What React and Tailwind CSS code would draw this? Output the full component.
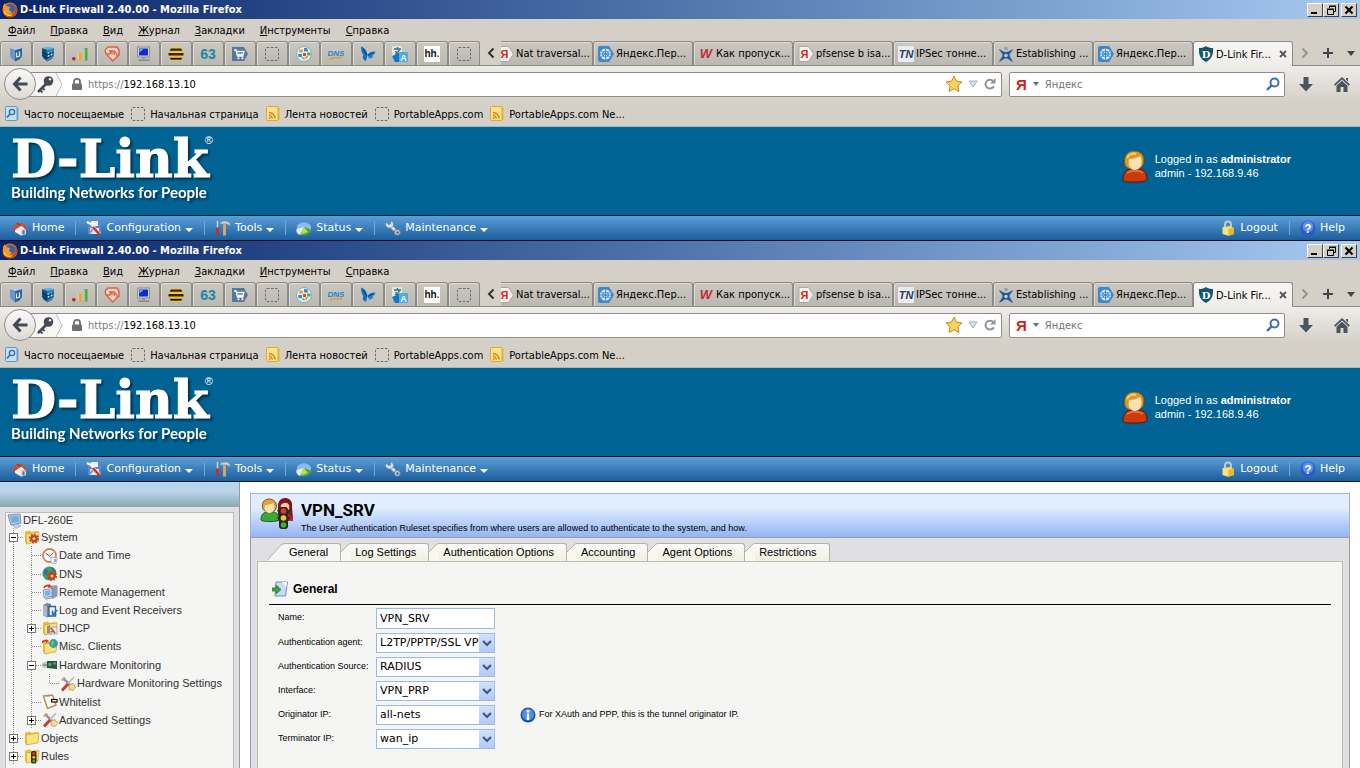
import { useState } from 'react';

const uiFont = "font-['DejaVu_Sans_Condensed','DejaVu_Sans',sans-serif]";
const navFont = "font-['DejaVu_Sans',sans-serif]";
const pageFont = "font-['Liberation_Sans',Arial,sans-serif]";

/* ---------- small 16x16 drawings ---------- */

const Svg = ({ children, className = 'w-4 h-4' }) => (
  <svg viewBox="0 0 16 16" className={`${className} shrink-0`} fill="none" aria-hidden="true">
    {children}
  </svg>
);

const FirefoxIcon = () => (
  <Svg>
    <circle cx="8" cy="8" r="7.5" fill="#e8761a" />
    <circle cx="8.5" cy="6.5" r="4.8" fill="#3a62a8" />
    <path d="M1 4l2-3 1 3 4 1-1 3 3 2-3 2-4-1-2-4z" fill="#f49a2a" />
    <path d="M13 2c3 3 3 8 0 11s-8 3-10 0c4 2 9 0 10-4 .6-2 .5-5 0-7z" fill="#c9470d" />
    <path d="M2 9c1 4 5 5 8 4" stroke="#fbc944" strokeWidth="1.2" />
  </Svg>
);

const CubeIcon = ({ dark }) => (
  <Svg>
    <path d="M2 2l6 1.500v12L4 13 2 10z" fill={dark ? '#15507f' : '#6d95c6'} />
    <path d="M7 3.500l7-1.500v8l-2.500 3.500-4.500 2z" fill={dark ? '#2b82b8' : '#2f62a3'} />
    <path d="M2 2L8 .5 14 2 7.500 4z" fill={dark ? '#5fb6dd' : '#b5cce6'} />
    <path d="M8.500 6.500v4.500l3-1V5.500" stroke="#dcebf8" strokeWidth="1.200" />
    {dark && <path d="M2.500 6l4.500 3 6.500-3M3 9.500l4 2.500 5.500-2.500" stroke="#0b2f52" strokeWidth="1.200" />}
  </Svg>
);

const BarsIcon = () => (
  <Svg>
    <circle cx="1.800" cy="12.800" r="1.800" fill="#c3202c" />
    <rect x="6" y="7" width="3.500" height="7.500" fill="#e5a92b" />
    <rect x="12" y="2" width="3.500" height="12.500" fill="#57a640" />
    <path d="M6.500 7.500v6.500M12.600 2.500v11.500" stroke="#fff" strokeOpacity=".5" />
  </Svg>
);

const HandIcon = () => (
  <Svg>
    <path d="M1 4l3-3h9l2 3v5L8.500 15 6 12" stroke="#dd6244" strokeWidth="1.500" fill="#ecd3ca" />
    <path d="M1 4l1 4 4 0M5 5h5l3 3v3M6 8l1-3M8 8.500V5.500M10.500 9l-.5-3M6 12l-3-3" stroke="#dd6244" strokeWidth="1.300" />
  </Svg>
);

const MonitorIcon = () => (
  <Svg>
    <rect x="1.500" y="1" width="12" height="10" fill="#d7d5cf" stroke="#8b8b95" />
    <rect x="3" y="2.500" width="9" height="7" fill="#0a2fd0" />
    <path d="M3.500 3h4l-4 3.500z" fill="#7ea6ff" />
    <path d="M6 11h3v2H6z" fill="#9a9aa2" />
    <path d="M2.500 14.200h11" stroke="#8a8890" strokeWidth="1.500" />
  </Svg>
);

const BeeIcon = () => (
  <Svg>
    <circle cx="8" cy="8" r="7.500" fill="#f6c62e" />
    <path d="M3 2.500h10l1.500 2.300h-13zM.5 7h15v2.500H.5zM1.500 11.700h13L13 13.700H3z" fill="#2b261f" />
  </Svg>
);

const LetterIcon = ({ text, fill, bg, size = 12, x = 8, y = 12, italic }) => (
  <Svg>
    {bg && <rect width="16" height="16" rx="1" fill={bg} />}
    <text x={x} y={y} textAnchor="middle" fontSize={size} fontWeight="bold" fill={fill}
      fontStyle={italic ? 'italic' : 'normal'} fontFamily="Liberation Sans, sans-serif">{text}</text>
  </Svg>
);

const CartIcon = () => (
  <Svg>
    <path d="M0 1h12l4 7-4 7H0z" fill="#54799f" />
    <path d="M2 4h2l1.500 6h6M5 5.500h7l-1 3H6" stroke="#fff" strokeWidth="1.300" />
    <circle cx="6.500" cy="12.300" r="1" fill="#fff" /><circle cx="10.500" cy="12.300" r="1" fill="#fff" />
  </Svg>
);

const BlankIcon = () => (
  <Svg>
    <rect x="1.500" y="1.500" width="13" height="13" rx="1.500" stroke="#6f6d69" strokeDasharray="2.500 1.500" />
  </Svg>
);

const BallIcon = () => (
  <Svg>
    <circle cx="8" cy="8" r="7.500" fill="#e6f1f5" stroke="#7fb0c8" />
    <path d="M3.500 3.500h3.200v3H3zM9.500 10h3l-2 3h-1z" fill="#f0952a" />
    <path d="M8 2h3l1.500 3.500H8zM2 8h4v3H2.500z" fill="#3690c8" />
    <path d="M11 6.500h3.500v3H11zM5 11.500h3.500V14z" fill="#5cab45" />
    <path d="M7 7h3v3H7z" fill="#d24a3a" />
  </Svg>
);

const DnsTextIcon = () => (
  <Svg>
    <text x="8" y="10" textAnchor="middle" fontSize="8" fontWeight="bold" fontStyle="italic" fill="#1787cc" fontFamily="Liberation Sans, sans-serif">DNS</text>
    <path d="M2 13c4-1.500 8-1.500 12-1.500" stroke="#e8932a" strokeWidth="1.400" />
  </Svg>
);

const ButterflyIcon = () => (
  <Svg>
    <path d="M1 .5c4 1 6 5 6.500 8.500L6 15C3 14 2 11 3.500 9 1.500 7 1 4 1 .5z" fill="#1470c5" />
    <path d="M7.500 9C9 6 12 5 15.500 5.500c0 2-1 3-2.500 3.500.5 2-1.500 4-4 3.500z" fill="#2583d6" />
    <path d="M3 3l4 6M13.500 6.500L8 9.500" stroke="#0b3f86" strokeWidth="1.100" />
  </Svg>
);

const TranslateIcon = () => (
  <Svg>
    <rect width="10" height="11" rx="1" fill="#dfe8da" />
    <path d="M2 3h7M5.500 1v2M3 8c3-1 4-3 4.500-5M3.500 5c1 2 2 3 4 3.500" stroke="#39708c" strokeWidth="1.300" />
    <path d="M0 10l7-3v9H3z" fill="#1574c6" />
    <rect x="7" y="6" width="9" height="10" rx="1" fill="#4fa9e4" />
    <text x="11.500" y="14.500" textAnchor="middle" fontSize="9" fontWeight="bold" fill="#fff" fontFamily="Liberation Sans, sans-serif">A</text>
  </Svg>
);

const YandexIcon = () => (
  <Svg>
    <path d="M1 .5h9.500l5 7.500-5 7.500H1z" fill="#f5f3f0" stroke="#a9a6a2" />
    <text x="6.500" y="12" textAnchor="middle" fontSize="11" fontWeight="bold" fill="#d8251c" fontFamily="Liberation Sans, sans-serif">Я</text>
  </Svg>
);

const GlobeTagIcon = () => (
  <Svg>
    <path d="M0 2q0-2 2-2h9l5 8-5 8H2q-2 0-2-2z" fill="#3f86cb" />
    <circle cx="7.500" cy="8" r="5.500" fill="#d5e9f8" />
    <path d="M3 5l9 6M3 11l9-6M7.500 2.500v11M2 8h11" stroke="#3f86cb" strokeWidth=".9" />
    <circle cx="7.500" cy="8" r="3" stroke="#3f86cb" strokeWidth=".9" />
  </Svg>
);

const SplashIcon = () => (
  <Svg>
    <path d="M1 3c3 1 4 3 7 3s4-2 7-3c-1 3-3.500 4-3.500 6s2.500 4 3.500 7c-3-1-4-3.500-7-3.500S4 15 1 16c1-3 3.500-5 3.500-7S2 6 1 3z" fill="#1d5c9e" />
    <circle cx="8" cy="2.500" r="1.800" fill="#8c9eb0" />
    <circle cx="8" cy="9.500" r="1.800" fill="#c8c5be" />
  </Svg>
);

const ShieldIcon = () => (
  <Svg>
    <path d="M8 0c2 1.500 4 2 7 2 .5 6-1 11-7 14C2 13 .5 8 1 2c3 0 5-.5 7-2z" fill="#14566f" />
    <text x="8" y="11.500" textAnchor="middle" fontSize="10" fontWeight="bold" fill="#fff" fontFamily="DejaVu Serif, serif">D</text>
  </Svg>
);

const FeedIcon = () => (
  <Svg>
    <path d="M3 1.500h11.500V14H3z" fill="#e0b744" />
    <rect x="1.500" y=".5" width="11.500" height="14" rx="1" fill="#f7e28a" stroke="#d3ac3a" />
    <path d="M4 6.500a6 6 0 016 6M4 9.300a3.200 3.200 0 013.200 3.200" stroke="#d8861c" strokeWidth="1.500" />
    <circle cx="4.700" cy="12" r="1" fill="#d8861c" />
  </Svg>
);

const FrequentIcon = () => (
  <Svg>
    <path d="M3 2h11.500v12H3z" fill="#7dabd0" />
    <rect x="1.500" y=".5" width="11.500" height="14" rx="1" fill="#c4e0f4" stroke="#5f97c4" />
    <circle cx="8" cy="6" r="2.600" stroke="#3b6f9f" strokeWidth="1.400" />
    <path d="M6 8l-3 3.500" stroke="#3b6f9f" strokeWidth="1.800" />
  </Svg>
);

const HouseIcon = () => (
  <Svg>
    <path d="M3 8l6-4 5 5v5l-5 1.500L3 12z" fill="#f3efe8" />
    <path d="M9 9l5-1v6l-5 1.500z" fill="#cfd5e0" />
    <path d="M0 8l5-5 5 0 6 6-2 1-4.500-4.500L3 10z" fill="#c8512b" />
    <path d="M5 3l4.500 3" stroke="#8d3012" />
    <path d="M10.500 10.500l2-.4v4l-2 .5z" fill="#56719c" />
  </Svg>
);

const ConfigIcon = () => (
  <Svg>
    <rect x="2" y="1" width="13" height="12" fill="#5d86cf" />
    <rect x="5" y="1" width="7" height="5" fill="#f0f2f8" />
    <rect x="4" y="8" width="9" height="6" fill="#dfe5f3" />
    <path d="M1 2l4 2 9 10" stroke="#fff" strokeWidth="2.400" />
    <path d="M7 7l7 8" stroke="#c8352c" strokeWidth="2.600" />
    <path d="M3 14l4-5" stroke="#8d96aa" strokeWidth="2" />
  </Svg>
);

const ToolsIcon = () => (
  <Svg>
    <path d="M2.500 1v7" stroke="#cfd4da" strokeWidth="1.500" />
    <path d="M2.500 7.500V15" stroke="#c32f22" strokeWidth="2.800" />
    <path d="M9.500 4v11.500" stroke="#d9ac68" strokeWidth="2.800" />
    <path d="M5 4c0-2 2-3 4-3h3l3 2v3l-3-2H5z" fill="#cdd1d6" stroke="#7c828a" strokeWidth=".6" />
  </Svg>
);

const StatusIcon = () => (
  <Svg>
    <ellipse cx="8" cy="9" rx="7.700" ry="6.300" fill="#3c74c4" />
    <ellipse cx="8" cy="7.500" rx="7.200" ry="5.300" fill="#8dbbe9" />
    <path d="M8 7l7.500 3c-1 4-6 6-11 5z" fill="#4fa638" />
    <path d="M8 7l-4 8C.5 13.500 0 11 .5 9z" fill="#ddeed6" />
    <path d="M8 7l4 5-7 2.500z" fill="#bade58" />
  </Svg>
);

const WrenchIcon = () => (
  <Svg>
    <path d="M4.500 5l7.500 7" stroke="#66788e" strokeWidth="4.400" />
    <path d="M4.500 5l7.500 7" stroke="#d8dfe8" strokeWidth="3" />
    <path d="M1 2l2.500 2.500L5.500 4 5.500 1c3 .5 4 4 2 6S1 8 .5 5z" fill="#d8dfe8" stroke="#66788e" strokeWidth=".6" />
    <circle cx="12.300" cy="12.300" r="3" fill="#c1cbd8" stroke="#6c7d92" />
    <circle cx="12.500" cy="12.500" r="1.200" fill="#41719f" />
  </Svg>
);

const PadlockIcon = () => (
  <Svg>
    <path d="M5 7V4.500c0-4 6-4 6 0V8" stroke="#c4c8d0" strokeWidth="2" />
    <path d="M2.500 7l7-1 4.500 2v6l-6 1.700L2.500 14z" fill="#f4da66" />
    <path d="M8.500 9L14 7.500V14l-5.500 1.700z" fill="#e3b93c" />
    <path d="M3 9h5M3 11h5M3 13h5" stroke="#fff3b8" strokeWidth=".8" />
  </Svg>
);

const HelpIcon = () => (
  <Svg>
    <circle cx="8" cy="8" r="7.500" fill="#2b58d0" />
    <circle cx="8" cy="6.500" r="5.500" fill="#5b8bec" />
    <text x="8" y="12.500" textAnchor="middle" fontSize="12" fontWeight="bold" fill="#fff" fontFamily="Liberation Sans, sans-serif">?</text>
  </Svg>
);

const InfoIcon = () => (
  <Svg>
    <circle cx="8" cy="8" r="7.500" fill="#1c4fa8" />
    <circle cx="8" cy="7.500" r="6" fill="#4d8fdd" />
    <rect x="6.800" y="6.500" width="2.400" height="6.500" fill="#fff" />
    <circle cx="8" cy="4.200" r="1.500" fill="#fff" />
  </Svg>
);

const PersonIcon = ({ className = 'w-[26px] h-8' }) => (
  <svg viewBox="0 0 26 32" className={className} aria-hidden="true">
    <path d="M1 28c0-6 4-10 9-10h6c5 0 9 3 9 9 0 3-2 4-12 4S1 31 1 28z" fill="#c93a0c" stroke="#5e1503" />
    <path d="M5 22c4-3 12-3 16 0" stroke="#ee6b34" strokeWidth="2" fill="none" />
    <path d="M3 14C1 6 5 0 12 0s12 5 9 14c-2 5-16 6-18 0z" fill="#d99a27" stroke="#8a5a10" />
    <path d="M5 7c2-4 6-5 9-4" stroke="#f5d27a" strokeWidth="2" fill="none" />
    <path d="M7 8c4 0 8-1 11-3 3 4 2 14-5 14-6 0-7-6-6-11z" fill="#fbe0b4" />
  </svg>
);

/* ---------- browser window ---------- */

const menus = ['Файл', 'Правка', 'Вид', 'Журнал', 'Закладки', 'Инструменты', 'Справка'];

const pinned = [
  ['Server', <CubeIcon />],
  ['Server 2', <CubeIcon dark />],
  ['Stats', <BarsIcon />],
  ['Hand', <HandIcon />],
  ['Desktop', <MonitorIcon />],
  ['Beeline', <BeeIcon />],
  ['63', <LetterIcon text="63" fill="#1b87a6" size={14} y={13} />],
  ['Shop', <CartIcon />],
  ['Blank', <BlankIcon />],
  ['Globe', <BallIcon />],
  ['DNS', <DnsTextIcon />],
  ['Butterfly', <ButterflyIcon />],
  ['Translate', <TranslateIcon />],
  ['hh', <LetterIcon text={<>hh<tspan fill="#e2231a">.</tspan></>} fill="#111" bg="#fff" size={10} y={11} />],
  ['Blank 2', <BlankIcon />],
];

const tabs = [
  ['Nat traversal...', <YandexIcon />],
  ['Яндекс.Пер...', <GlobeTagIcon />],
  ['Как пропуск...', <LetterIcon text="W" fill="#bf2f36" size={13} italic />],
  ['pfsense b isa...', <YandexIcon />],
  ['IPSec тонне...', <LetterIcon text="TN" fill="#2b4164" bg="#e9ecf0" size={11} italic />],
  ['Establishing ...', <SplashIcon />],
  ['Яндекс.Пер...', <GlobeTagIcon />],
];

const bookmarks = [
  ['Часто посещаемые', <FrequentIcon />],
  ['Начальная страница', <BlankIcon />],
  ['Лента новостей', <FeedIcon />],
  ['PortableApps.com', <BlankIcon />],
  ['PortableApps.com Ne...', <FeedIcon />],
];

const navLinks = [
  ['Home', <HouseIcon />, false],
  ['Configuration', <ConfigIcon />, true],
  ['Tools', <ToolsIcon />, true],
  ['Status', <StatusIcon />, true],
  ['Maintenance', <WrenchIcon />, true],
];

const WindowButton = ({ label, children }) => (
  <button type="button" aria-label={label} className="h-[14px] w-4 bg-[#d4d0c8] border border-t-white border-l-white border-r-[#404040] border-b-[#404040] flex items-center justify-center">
    <svg viewBox="0 0 10 10" className="w-[10px] h-[10px]" fill="none" stroke="#000">{children}</svg>
  </button>
);

const TitleBar = () => (
  <div className="h-[19px] pl-[2px] pr-[3px] flex items-center bg-linear-to-r from-[#0a246a] to-[#a6caf0]">
    <FirefoxIcon />
    <span className="ml-[2px] pt-[2px] flex-1 text-[11px] font-bold text-white whitespace-nowrap">D-Link Firewall 2.40.00 - Mozilla Firefox</span>
    <WindowButton label="Minimize"><path d="M1 8h6" strokeWidth="2" /></WindowButton>
    <WindowButton label="Restore">
      <path d="M3.500 3V1.500h6v5H8M3 1h7" /><path d="M1.500 4.500h6v5h-6zM1 4h7" />
    </WindowButton>
    <span className="w-[2px]" />
    <WindowButton label="Close"><path d="M1.500 1.500l7 7M8.500 1.500l-7 7" strokeWidth="2" /></WindowButton>
  </div>
);

const tabShape = 'rounded-t-[3px] border border-[#8d8b87] shadow-[inset_1px_1px_0_#dedbd5]';

const TabStrip = () => (
  <div className="h-[25px] flex items-stretch border-b border-[#8d8b87]">
    {pinned.map(([name, icon]) => (
      <button key={name} type="button" aria-label={name} className={`w-8 shrink-0 border-b-0 flex items-center justify-center bg-linear-to-b from-[#cbc8c1] to-[#bbb8b1] ${tabShape}`}>
        {icon}
      </button>
    ))}
    <button type="button" aria-label="Scroll left" className="w-[21px] shrink-0 flex items-center justify-center">
      <svg viewBox="0 0 8 12" className="w-2 h-3" fill="none" stroke="#333" strokeWidth="2"><path d="M6.500 1.500L2 6l4.500 4.500" /></svg>
    </button>
    <div className="flex-1 min-w-0 flex justify-end overflow-hidden -mb-px">
      {tabs.map(([title, icon], i) => (
        <button key={i} type="button" className={`w-[100px] mb-px shrink-0 pl-1 gap-[2px] border-b-0 flex items-center overflow-hidden bg-linear-to-b from-[#cbc8c1] to-[#bbb8b1] whitespace-nowrap ${tabShape}`}>
          {icon}
          <span className="pt-[2px]">{title}</span>
        </button>
      ))}
      <div className="w-[100px] shrink-0 pl-1 pr-[5px] gap-[2px] border-b-0 rounded-t-[3px] border border-[#8d8b87] bg-linear-to-b from-[#f8f7f5] to-[#efedea] flex items-center whitespace-nowrap">
        <ShieldIcon />
        <span className="flex-1 pt-[2px]">D-Link Fir...</span>
        <button type="button" aria-label="Close tab">
          <svg viewBox="0 0 8 8" className="w-2 h-2" stroke="#555" strokeWidth="1.800"><path d="M1 1l6 6M7 1L1 7" /></svg>
        </button>
      </div>
    </div>
    <div className="w-[67px] shrink-0 pl-2 pr-[5px] flex items-center justify-between">
      <button type="button" aria-label="Scroll right">
        <svg viewBox="0 0 8 12" className="w-2 h-3" fill="none" stroke="#94918c" strokeWidth="1.800"><path d="M1.500 1.500L6 6l-4.500 4.500" /></svg>
      </button>
      <button type="button" aria-label="New tab">
        <svg viewBox="0 0 12 12" className="w-3 h-3" stroke="#3f454c" strokeWidth="2"><path d="M6 1v10M1 6h10" /></svg>
      </button>
      <button type="button" aria-label="All tabs">
        <svg viewBox="0 0 8 5" className="w-2 h-[5px]" fill="#3f454c"><path d="M0 0h8L4 5z" /></svg>
      </button>
    </div>
  </div>
);

const AddressBar = () => (
  <div className="h-9 pl-1 pr-[10px] flex items-center bg-linear-to-b from-[#efedea] to-[#d4d0c8]">
    <button type="button" aria-label="Back" className="relative z-10 w-8 h-8 shrink-0 rounded-full border border-[#8f8d89] bg-linear-to-b from-[#fbfaf9] to-[#dddad4] flex items-center justify-center">
      <svg viewBox="0 0 16 16" className="w-4 h-4" fill="none" stroke="#424c57" strokeWidth="3"><path d="M8.500 1.500L2.500 8l6 6.500M3 8h12.500" /></svg>
    </button>
    <div className="-ml-2 h-[25px] flex-1 min-w-0 flex items-center border border-[#8f8d89] rounded-r-[2px] bg-white">
      <svg viewBox="0 0 34 23" className="w-[34px] h-[23px] shrink-0" fill="none">
        <path d="M0 0h27l6 11.500-6 11.500H0z" fill="#f7f6f4" />
        <path d="M27 0l6 11.500-6 11.500" stroke="#bdbbb7" />
        <path d="M9 19l9-9" stroke="#424c57" strokeWidth="2.600" />
        <path d="M11 17l2.500 2.500M13 14.500l2.500 2.500" stroke="#424c57" strokeWidth="1.800" />
        <circle cx="19.500" cy="8" r="4.800" fill="#424c57" />
        <circle cx="21" cy="6.300" r="1.200" fill="#f7f6f4" />
      </svg>
      <svg viewBox="0 0 10 12" className="ml-[9px] w-[10px] h-3 shrink-0" fill="none">
        <path d="M2 6V3.500c0-3.500 6-3.500 6 0V6" stroke="#6f6f6f" strokeWidth="1.800" />
        <rect y="5.500" width="10" height="6.500" rx="1" fill="#6f6f6f" />
      </svg>
      <div className="ml-[6px] pt-[2px] flex-1 text-[#7c7c7c]">https://<span className="text-black">192.168.13.10</span></div>
      <button type="button" aria-label="Bookmark this page">
        <svg viewBox="0 0 18 18" className="w-[18px] h-[18px]"><path d="M9 1l2.400 5.200 5.600.7-4.100 3.900 1.100 5.700L9 13.700l-5 2.800 1.100-5.700L1 6.900l5.600-.7z" fill="#fbd35c" stroke="#c08a2e" /></svg>
      </button>
      <svg viewBox="0 0 10 8" className="ml-[5px] w-[10px] h-2" fill="#dfe2e6" stroke="#a5aab2"><path d="M1 1h8L5 7z" /></svg>
      <button type="button" aria-label="Reload" className="ml-[6px] mr-[5px]">
        <svg viewBox="0 0 12 12" className="w-3 h-3" fill="none"><path d="M9.500 3.500A4.400 4.400 0 106 10.500c1.500 0 3-.8 4-2" stroke="#8e959d" strokeWidth="2" /><path d="M11.500 0v5.500H6z" fill="#8e959d" /></svg>
      </button>
    </div>
    <div className="ml-[7px] w-[276px] h-[25px] shrink-0 pl-[6px] pr-1 flex items-center border border-[#8f8d89] rounded-[2px] bg-white">
      <span className="text-[15px] leading-none font-bold text-[#cf1f17] font-['Liberation_Sans',sans-serif]">Я</span>
      <svg viewBox="0 0 6 4" className="ml-[6px] w-[6px] h-1" fill="#6d6d6d"><path d="M0 0h6L3 4z" /></svg>
      <input type="search" aria-label="Яндекс" placeholder="Яндекс" className="ml-[6px] pt-[2px] flex-1 min-w-0 outline-none placeholder:text-[#757575]" />
      <button type="button" aria-label="Search">
        <svg viewBox="0 0 14 14" className="w-[14px] h-[14px]" fill="none" stroke="#3c6fae"><circle cx="8.500" cy="5.500" r="4" strokeWidth="2" /><path d="M5.500 8.500L1 13" strokeWidth="2.400" /></svg>
      </button>
    </div>
    <button type="button" aria-label="Downloads" className="ml-[14px]">
      <svg viewBox="0 0 14 15" className="w-[14px] h-[15px]" fill="#4b5560"><path d="M4.500 0h5v7H14l-7 7.500L0 7h4.500z" /></svg>
    </button>
    <button type="button" aria-label="Home page" className="ml-[21px]">
      <svg viewBox="0 0 16 15" className="w-4 h-[15px]"><path d="M8 0l8 7.500-1.200 1.200L8 2.500 1.200 8.700 0 7.500zM12 1h2v3.500l-2-2z" fill="#4b5560" /><path d="M8 3.800l5.500 5V15H9.500v-5h-3v5h-4V8.800z" fill="#4b5560" /></svg>
    </button>
  </div>
);

const BrandHeader = () => (
  <header className={`h-[89px] border-t border-[#a5b8bf] bg-[#006394] flex items-start justify-between text-white ${pageFont}`}>
    <a href="#home" className="pl-[11px] pt-[7px] block">
      <span className="flex items-start">
        <span className="text-[52px] leading-[50px] font-bold [-webkit-text-stroke:1px_white] [filter:drop-shadow(2px_2px_1px_#00304a)] font-['DejaVu_Serif',serif]">D-Link</span>
        <span className="text-[11px] leading-3 -ml-1">®</span>
      </span>
      <span className="block text-[15px] leading-4 font-bold whitespace-nowrap [filter:drop-shadow(2px_2px_1px_#00304a)] font-['Lato',sans-serif]">Building Networks for People</span>
    </a>
    <div className="pt-6 pr-[69px] flex gap-[7px]">
      <PersonIcon />
      <p className="text-[11px] leading-[14px] pt-px">
        Logged in as <b>administrator</b><br />admin - 192.168.9.46
      </p>
    </div>
  </header>
);

const Separator = () => <span className="w-px h-[14px] bg-[#6fa9d8] ml-[11px] mr-[10px]" />;

const SiteNav = () => (
  <nav className={`h-[26px] pl-3 pr-[15px] flex items-center border-y border-[#06121c] bg-linear-to-b from-[#5b9fd8] to-[#1a5e9c] text-[11px] text-white whitespace-nowrap ${navFont}`}>
    {navLinks.map(([label, icon, more], i) => (
      <div key={label} className="flex items-center">
        {i > 0 && <Separator />}
        <a href={`#${label}`} className="flex items-center gap-1">
          {icon}
          {label}
          {more && <svg viewBox="0 0 8 4" className="w-2 h-1 mt-1" fill="#fff"><path d="M0 0h8L4 4z" /></svg>}
        </a>
      </div>
    ))}
    <span className="flex-1" />
    <a href="#logout" className="flex items-center gap-1"><PadlockIcon />Logout</a>
    <Separator />
    <a href="#help" className="flex items-center gap-1"><HelpIcon />Help</a>
  </nav>
);

const BrowserTop = () => (
  <section className={`shrink-0 bg-[#d4d0c8] text-[11px] text-black ${uiFont}`}>
    <TitleBar />
    <div className="h-[22px] pl-2 pt-[2px] flex items-center gap-[15px]">
      {menus.map((m) => (
        <button key={m} type="button"><u>{m[0]}</u>{m.slice(1)}</button>
      ))}
    </div>
    <TabStrip />
    <AddressBar />
    <div className="h-6 pl-1 flex items-center gap-[6px] whitespace-nowrap">
      {bookmarks.map(([label, icon]) => (
        <a key={label} href="#bookmark" className="flex items-center gap-1">
          {icon}
          <span className="pt-[2px]">{label}</span>
        </a>
      ))}
    </div>
    <BrandHeader />
    <SiteNav />
  </section>
);

/* ---------- navigation tree ---------- */

const FolderIcon = ({ children }) => (
  <Svg>
    <path d="M1 2.500l5-1 1.500 1.500 6-1V12l-11 2.500L1 13z" fill="#e9bd3a" />
    <path d="M2 5l13-2.200-1 10L2.500 15z" fill="#fbe27c" stroke="#cf9e2d" strokeWidth=".7" />
    {children}
  </Svg>
);

const Gear = ({ cx = 10, cy = 9.500 }) => (
  <>
    <circle cx={cx} cy={cy} r="3.600" fill="#c8391a" />
    <circle cx={cx} cy={cy} r="4.300" stroke="#c8391a" strokeWidth="1.600" strokeDasharray="1.900 1.400" />
    <circle cx={cx} cy={cy} r="1.500" fill="#f4d7a0" />
  </>
);

const treeIcons = {
  pc: (
    <Svg>
      <path d="M1 2l12-1 1 9-10 2z" fill="#b9cbe4" stroke="#7d8fae" />
      <path d="M3 3.500l8.500-.8.8 6-7.500 1.300z" fill="#6ab2e8" />
      <path d="M5 12l5-1 4 2-5 2.500z" fill="#c5cedd" stroke="#8c98b0" strokeWidth=".6" />
    </Svg>
  ),
  system: <FolderIcon><Gear /></FolderIcon>,
  clock: (
    <Svg>
      <circle cx="7.500" cy="7.500" r="6.500" fill="#fff" stroke="#d8805a" strokeWidth="1.800" />
      <path d="M3.500 5l4 3 4-3" stroke="#555" />
      <path d="M9 9l6 1-1 5.500-5-.5z" fill="#eef2fa" stroke="#8fa0c0" strokeWidth=".7" />
      <path d="M13 11v3" stroke="#3d63bb" />
    </Svg>
  ),
  dns: (
    <Svg>
      <circle cx="7.500" cy="7.500" r="7" fill="#3f9f5c" />
      <path d="M2 4c3-2 5 0 4 2S3 9 1.500 9zM8 1c4 0 6 3 6 6l-3-2z" fill="#2f6fb5" />
      <Gear cx={10} cy={10} />
    </Svg>
  ),
  remote: (
    <Svg>
      <path d="M9 2l5-1 1.500 1v10L11 15l-2-1z" fill="#8e9bb8" />
      <path d="M1 6l9-1.500V12L2 13.500z" fill="#dfe7f3" stroke="#6f80a0" strokeWidth=".8" />
      <path d="M2.500 7l6-1v5l-5.500 1z" fill="#6fb5e6" />
      <path d="M2 4c1-3 5-3 6-1.500" stroke="#cf3a2b" strokeWidth="1.800" /><path d="M7 0l3 3-4 1z" fill="#cf3a2b" />
      <path d="M3 15l6-1" stroke="#9aa7c0" strokeWidth="1.500" />
    </Svg>
  ),
  log: (
    <Svg>
      <path d="M1 3l4-2 4 1v12l-4 1.500-4-2z" fill="#7483a3" />
      <path d="M1 3l4 1v11.500l-4-2z" fill="#a9b5cc" />
      <path d="M7 4.500h6.500V14H7z" fill="#eaf2fc" stroke="#2f6299" strokeWidth="1.300" />
      <path d="M15.500 8l-4.500 4M10.500 8.500v4h4" stroke="#2b72c0" strokeWidth="1.500" />
    </Svg>
  ),
  dhcp: (
    <FolderIcon>
      <path d="M5 6l3-1v8l-3 .7z" fill="#9c8f78" />
      <path d="M8 7h7v7H8z" fill="#e5ebf5" stroke="#8090ad" strokeWidth=".7" />
      <path d="M9 8l4 5M9 12l3-1" stroke="#c74a28" strokeWidth="1.500" />
    </FolderIcon>
  ),
  clients: (
    <FolderIcon>
      <circle cx="11.500" cy="4.500" r="4.400" fill="#3a97b8" />
      <path d="M9 2.500c2-2 4 0 3 2s-2 3-3 2z" fill="#6cc250" />
      <path d="M0 4c1-2.500 3-3 5-2" stroke="#cf3a2b" strokeWidth="1.700" /><path d="M4 0l3 2-3 2z" fill="#cf3a2b" />
    </FolderIcon>
  ),
  hardware: (
    <Svg>
      <path d="M0 6l7-2v7l-7-1z" fill="#b9c3ba" />
      <path d="M5 4h10v8l-10-1z" fill="#24573f" />
      <path d="M6.500 6h3v3h-3zM11 5.500h3v2h-3z" fill="#5f9c7c" />
      <path d="M1 8h4" stroke="#6d7a70" />
    </Svg>
  ),
  settings: (
    <Svg>
      <path d="M3 2l10 10" stroke="#8b8f96" strokeWidth="2.400" />
      <path d="M9 9l4-1.500 2.500 4-2.500 3-4-1z" fill="#f0d9a0" stroke="#b58f4a" strokeWidth=".7" />
      <path d="M14 1L8 7.500" stroke="#b9bdc4" strokeWidth="1.800" />
      <path d="M8 8l-6 6.500" stroke="#d13a2a" strokeWidth="3" />
      <path d="M1 4l3-3 2 1-3 3z" fill="#c9a06a" />
    </Svg>
  ),
  whitelist: (
    <Svg>
      <path d="M1.500 2l9-1 3.500 10-8.500 3.500z" fill="#fff" stroke="#c48d48" strokeWidth="1.500" />
      <path d="M4 1h4v1.500H4z" fill="#8b8f96" />
      <rect x="9.500" y="5.500" width="5.500" height="2.500" fill="#fff" stroke="#111" strokeWidth="1.200" />
    </Svg>
  ),
  folder: <FolderIcon />,
  rules: (
    <FolderIcon>
      <rect x="7" y="3" width="5.500" height="12.500" rx="2" fill="#2d2a26" />
      <circle cx="9.800" cy="5.500" r="1.500" fill="#e0352a" /><circle cx="9.800" cy="9.200" r="1.500" fill="#e8b52c" /><circle cx="9.800" cy="12.900" r="1.500" fill="#39b03f" />
    </FolderIcon>
  ),
};

// guides: one letter per 18px column. I = line, T = branch, L = last branch,
// P = plus box, M = minus box
const tree = [
  { label: 'System', icon: 'system', guides: 'M' },
  { label: 'Date and Time', icon: 'clock', guides: 'IT', first: true },
  { label: 'DNS', icon: 'dns', guides: 'IT' },
  { label: 'Remote Management', icon: 'remote', guides: 'IT' },
  { label: 'Log and Event Receivers', icon: 'log', guides: 'IT' },
  { label: 'DHCP', icon: 'dhcp', guides: 'IP' },
  { label: 'Misc. Clients', icon: 'clients', guides: 'IT', first: true },
  { label: 'Hardware Monitoring', icon: 'hardware', guides: 'IM' },
  { label: 'Hardware Monitoring Settings', icon: 'settings', guides: 'IIL', first: true },
  { label: 'Whitelist', icon: 'whitelist', guides: 'IT' },
  { label: 'Advanced Settings', icon: 'settings', guides: 'IP' },
  { label: 'Objects', icon: 'folder', guides: 'P' },
  { label: 'Rules', icon: 'rules', guides: 'P' },
];

const Guide = ({ kind }) => (
  <svg className="w-[18px] h-full shrink-0" fill="none" stroke="#8c8c8c" strokeDasharray="1 1" aria-hidden="true">
    <line x1="7.5" y1="0" x2="7.5" y2={kind === 'L' ? '50%' : '100%'} />
    {kind !== 'I' && <line x1="8" y1="9.5" x2="18" y2="9.5" />}
    {(kind === 'P' || kind === 'M') && (
      <g strokeDasharray="none">
        <rect x="3.500" y="5.500" width="8" height="8" fill="#fff" stroke="#777" />
        <path d={kind === 'P' ? 'M5 9.500h5M7.500 7v5' : 'M5 9.500h5'} stroke="#000" />
      </g>
    )}
  </svg>
);

const Sidebar = () => (
  <aside className={`w-[240px] shrink-0 flex flex-col border-r border-[#9a9aa0] bg-[#e0dfe3] text-[11px] text-[#333] ${pageFont}`}>
    <div className="h-[25px] shrink-0 border-b border-[#9fa5aa] bg-linear-to-b from-[#b9d5ea] from-40% to-[#8aabb3]" />
    <div className="mt-[5px] mx-[5px] flex-1 min-h-0 overflow-hidden border border-b-0 border-[#bcbcbc] bg-[#f5f5f3] whitespace-nowrap">
      <div className="h-[15px] pl-px flex items-center">{treeIcons.pc}<span>DFL-260E</span></div>
      <ul>
        {tree.map((node) => (
          <li key={node.label} className={`flex items-center ${node.first ? 'h-[19px]' : 'h-[18px]'}`}>
            {node.guides.split('').map((g, i) => <Guide key={i} kind={g} />)}
            <a href="#node" className="flex items-center gap-px">{treeIcons[node.icon]}{node.label}</a>
          </li>
        ))}
      </ul>
    </div>
  </aside>
);

/* ---------- VPN_SRV form ---------- */

const formTabs = ['General', 'Log Settings', 'Authentication Options', 'Accounting', 'Agent Options', 'Restrictions'];

const fields = [
  { id: 'agent', label: 'Authentication agent:', value: 'L2TP/PPTP/SSL VPN' },
  { id: 'source', label: 'Authentication Source:', value: 'RADIUS' },
  { id: 'interface', label: 'Interface:', value: 'VPN_PRP' },
  { id: 'originator', label: 'Originator IP:', value: 'all-nets', note: 'For XAuth and PPP, this is the tunnel originator IP.' },
  { id: 'terminator', label: 'Terminator IP:', value: 'wan_ip' },
];

const RulesetIcon = () => (
  <svg viewBox="0 0 34 32" className="w-[34px] h-8 shrink-0" aria-hidden="true">
    <path d="M18 8c0-5 3-8 7-8s8 3 7 9l1 12-10 4-5-4z" fill="#7a1620" />
    <path d="M21 7c2-3 7-3 8 0 1 4-1 8-4 8s-5-4-4-8z" fill="#f2c9a0" />
    <path d="M17 22c1-6 6-7 9-7s6 2 7 8z" fill="#b3202a" />
    <path d="M1 22c0-6 3-8 7-8h5c4 0 6 3 6 8 0 2-18 2-18 0z" fill="#3ba83a" stroke="#17601c" />
    <path d="M3 11C1 5 4 1 9 1s9 4 7 10c-2 4-11 4-13 0z" fill="#dda63a" stroke="#8a5a10" />
    <path d="M5 7c3 0 6-1 8-2 3 3 1 10-3 10-5 0-6-4-5-8z" fill="#fbe0b4" />
    <rect x="19" y="9" width="9" height="22" rx="3" fill="#2b2620" />
    <path d="M17 12h2l0 4zM17 19h2v4zM30 12h-2v4zM30 19h-2v4z" fill="#2b2620" />
    <circle cx="23.500" cy="13" r="2.800" fill="#e3372c" />
    <circle cx="23.500" cy="20" r="2.800" fill="#f2c431" />
    <circle cx="23.500" cy="27" r="2.800" fill="#35b53e" />
  </svg>
);

const SectionIcon = () => (
  <Svg>
    <path d="M4 1l11.500 0-2 14H3z" fill="#c9dcf4" stroke="#6f8fc0" />
    <path d="M10 1l5 0-.7 5z" fill="#fff" />
    <path d="M0 7h4V4l5 4.500L4 13v-3H0z" fill="#3da53a" stroke="#1f6b22" strokeWidth=".7" />
  </Svg>
);

const FormTab = ({ label, active, onClick }) => (
  <button type="button" role="tab" aria-selected={active} onClick={onClick} className={`flex h-[18px] ${active ? '-mb-px' : ''}`}>
    {active ? (
      <svg viewBox="0 0 18 18" className="w-[18px] h-[18px]" fill="none">
        <path d="M0 18L14 2q2-1.500 4-1.500V18z" fill="#f5f5f3" />
        <path d="M0 17.500L14 2q2-1.500 4-1.500" stroke="#b5b3a5" />
      </svg>
    ) : (
      <svg viewBox="0 0 10 18" className="w-[10px] h-[18px]" fill="none">
        <path d="M0 9L7 2q1-1.500 3-1.500V18H0z" fill="#f8f7f0" />
        <path d="M0 9L7 2q1-1.500 3-1.500" stroke="#b5b3a5" />
      </svg>
    )}
    <span className={`h-full pl-1 pr-3 flex items-center border-t border-r border-[#b5b3a5] rounded-tr-[3px] ${active ? 'bg-[#f5f5f3]' : 'bg-linear-to-b from-[#fbfbf8] to-[#f0efe2]'}`}>{label}</span>
  </button>
);

const RulesetPanel = () => {
  const [tab, setTab] = useState('General');
  const [name, setName] = useState('VPN_SRV');

  return (
    <main className={`flex-1 min-w-0 px-[10px] pt-[11px] flex flex-col bg-white text-black ${pageFont}`}>
      <div className="h-[45px] shrink-0 pl-[9px] pt-1 flex items-start gap-[7px] border border-[#9ab4dc] border-b-[#9a9db0] bg-linear-to-b from-[#e2eeff] from-30% to-[#94b4f2]">
        <RulesetIcon />
        <div className="whitespace-nowrap">
          <h1 className="text-[17px] leading-6 font-bold font-['Roboto',sans-serif]">VPN_SRV</h1>
          <p className="text-[9px] leading-3">The User Authentication Ruleset specifies from where users are allowed to authenticate to the system, and how.</p>
        </div>
      </div>
      <div className="flex-1 min-h-0 px-[6px] pt-[5px] flex flex-col border-x border-[#9a9aa0] bg-[#e0dfe3]">
        <div role="tablist" className="relative pl-[10px] flex shrink-0 text-[11px] whitespace-nowrap">
          {formTabs.map((t) => (
            <FormTab key={t} label={t} active={t === tab} onClick={() => setTab(t)} />
          ))}
        </div>
        <form className="flex-1 min-h-0 overflow-hidden px-[11px] pt-[19px] border border-b-0 border-[#bfbdb2] bg-[#f5f5f3]" onSubmit={(e) => e.preventDefault()}>
          <h2 className="pl-[3px] pb-[7px] flex items-center gap-[5px] text-[12px] leading-4 font-bold border-b border-black">
            <SectionIcon />
            General
          </h2>
          <div className="pl-[9px] pt-[3px] text-[9px]">
            <div className="h-[25px] flex items-start">
              <label htmlFor="name" className="w-[98px] leading-[18px]">Name:</label>
              <input id="name" type="text" value={name} onChange={(e) => setName(e.target.value)}
                className={`w-[119px] h-[21px] px-[3px] border border-[#9db9e6] bg-white text-[11px] leading-4 outline-none ${navFont}`} />
            </div>
            {fields.map((f) => (
              <div key={f.id} className="h-6 flex items-start">
                <label htmlFor={f.id} className="w-[98px] shrink-0 leading-[18px] whitespace-nowrap">{f.label}</label>
                <div className="relative shrink-0">
                  <select id={f.id} className={`block w-[119px] h-5 pl-[3px] pr-[15px] border border-[#9db9e6] bg-white text-[11px] leading-4 appearance-none outline-none ${navFont}`}>
                    <option>{f.value}</option>
                  </select>
                  <span className="absolute right-px top-px bottom-px w-[15px] bg-linear-to-b from-[#d2e0fd] to-[#b4caf5] flex items-center justify-center pointer-events-none">
                    <svg viewBox="0 0 10 7" className="w-[10px] h-[7px]" fill="none" stroke="#3d5a88" strokeWidth="2.200"><path d="M1 1l4 4 4-4" /></svg>
                  </span>
                </div>
                {f.note && (
                  <p className="ml-[25px] mt-[2px] flex items-center gap-[3px] whitespace-nowrap"><InfoIcon />{f.note}</p>
                )}
              </div>
            ))}
          </div>
        </form>
      </div>
    </main>
  );
};

const App = () => (
  <div className="h-screen overflow-hidden flex flex-col bg-white">
    <BrowserTop />
    <BrowserTop />
    <div className="flex-1 min-h-0 flex">
      <Sidebar />
      <RulesetPanel />
    </div>
  </div>
);

export default App;
